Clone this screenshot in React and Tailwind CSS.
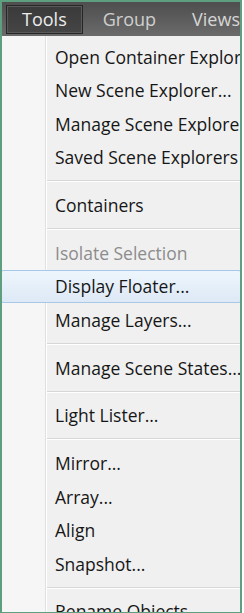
import React from 'react';

const items = [
  { label: 'Open Container Explorer' },
  { label: 'New Scene Explorer...' },
  { label: 'Manage Scene Explorer' },
  { label: 'Saved Scene Explorers' },
  { sep: true },
  { label: 'Containers' },
  { sep: true },
  { label: 'Isolate Selection', disabled: true },
  { label: 'Display Floater...', active: true },
  { label: 'Manage Layers...' },
  { sep: true },
  { label: 'Manage Scene States...' },
  { sep: true },
  { label: 'Light Lister...' },
  { sep: true },
  { label: 'Mirror...' },
  { label: 'Array...' },
  { label: 'Align' },
  { label: 'Snapshot...' },
  { sep: true },
  { label: 'Rename Objects' },
];

const MenuRow = ({ item }) => {
  if (item.sep) {
    return (
      <div className="h-[14.3px] shrink-0 flex flex-col justify-center pl-[45px]">
        <div className="h-px bg-[#d7d7d7]" />
        <div className="h-px bg-white" />
      </div>
    );
  }
  return (
    <div
      className={
        'h-[33.5px] shrink-0 flex items-center pl-[53px] whitespace-nowrap text-[17.5px] ' +
        (item.active
          ? 'bg-[linear-gradient(#eef5fc,#dde9f6)] border border-[#a9c7e6] rounded-[2px] -mx-[1px]'
          : '') +
        (item.disabled ? ' text-[#8c8c8c]' : ' text-[#161616]')
      }
    >
      {item.label}
    </div>
  );
};

const App = () => {
  return (
    <div
      className="w-[244px] h-[613px] overflow-hidden bg-white"
      style={{ fontFamily: '"Open Sans", "Noto Sans", sans-serif' }}
    >
      <div className="w-[242px] h-full border-t-2 border-x-2 border-b border-[#5e9f80] flex flex-col overflow-hidden">
        {/* Menu bar */}
        <div className="h-[34px] shrink-0 flex items-center bg-[linear-gradient(#4e4e4e,#5c5c5c_50%,#6b6b6b)] text-[18px]">
          <div className="ml-[4px] h-[29px] w-[78px] flex items-center justify-center bg-[linear-gradient(#3a3a3a,#454545)] border border-[#262626] shadow-[inset_0_0_0_1px_#5a5a5a] text-[#ececec]">
            Tools
          </div>
          <div className="ml-[20px] text-[#cfcfcf]">Group</div>
          <div className="ml-[36px] text-[#d6d6d6]">Views</div>
        </div>
        {/* Dropdown */}
        <div className="flex-1 min-h-0 flex flex-col pt-[4px] bg-[linear-gradient(to_right,#f6f6f6_43px,#e0e0e0_43px,#e0e0e0_44px,#ffffff_44px,#ffffff_45px,#f0f0f0_45px)] overflow-hidden">
          {items.map((item, i) => (
            <MenuRow key={i} item={item} />
          ))}
        </div>
      </div>
    </div>
  );
};

export default App;
